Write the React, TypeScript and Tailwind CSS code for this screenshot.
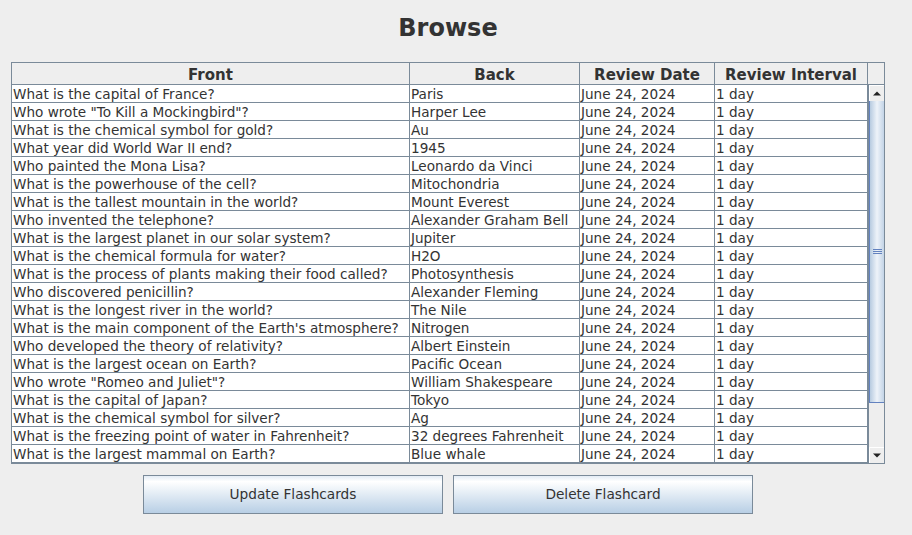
const cards: [string, string][] = [
  ["What is the capital of France?", "Paris"],
  ['Who wrote "To Kill a Mockingbird"?', "Harper Lee"],
  ["What is the chemical symbol for gold?", "Au"],
  ["What year did World War II end?", "1945"],
  ["Who painted the Mona Lisa?", "Leonardo da Vinci"],
  ["What is the powerhouse of the cell?", "Mitochondria"],
  ["What is the tallest mountain in the world?", "Mount Everest"],
  ["Who invented the telephone?", "Alexander Graham Bell"],
  ["What is the largest planet in our solar system?", "Jupiter"],
  ["What is the chemical formula for water?", "H2O"],
  ["What is the process of plants making their food called?", "Photosynthesis"],
  ["Who discovered penicillin?", "Alexander Fleming"],
  ["What is the longest river in the world?", "The Nile"],
  ["What is the main component of the Earth's atmosphere?", "Nitrogen"],
  ["Who developed the theory of relativity?", "Albert Einstein"],
  ["What is the largest ocean on Earth?", "Pacific Ocean"],
  ['Who wrote "Romeo and Juliet"?', "William Shakespeare"],
  ["What is the capital of Japan?", "Tokyo"],
  ["What is the chemical symbol for silver?", "Ag"],
  ["What is the freezing point of water in Fahrenheit?", "32 degrees Fahrenheit"],
  ["What is the largest mammal on Earth?", "Blue whale"],
];

const headerCell = "h-full pt-[3px] flex items-center justify-center border-r border-[#7a8a99] text-[15px] font-bold";
const cell = "h-full pl-[1px] pt-[2px] flex items-center border-r border-[#7a8a99] whitespace-nowrap overflow-hidden";

function ArrowButton({ up }: { up?: boolean }) {
  return (
    <div className="h-[16px] w-full flex items-center justify-center bg-[#eeeeee] border-t border-l border-white">
      <svg width="8" height="5" viewBox="0 0 8 5">
        {up ? <path d="M0 4.5 L4 0.5 L8 4.5 Z" fill="#222" /> : <path d="M0 0.5 L4 4.5 L8 0.5 Z" fill="#222" />}
      </svg>
    </div>
  );
}

export default function App() {
  return (
    <div
      className="w-[912px] h-[535px] bg-[#eeeeee] text-[#333333] overflow-hidden"
      style={{ fontFamily: '"DejaVu Sans", sans-serif' }}
    >
      <div className="ml-[11px] w-[874px] flex flex-col">
        <div className="h-[56px] flex items-center justify-center text-[24px] font-bold">Browse</div>
        <div className="h-[6px]" />

        <div className="border border-[#7a8a99] bg-white h-[402px] flex flex-col">
          {/* header */}
          <div className="h-[22px] flex border-b border-[#7a8a99] bg-[#eeeeee]">
            <div className={`${headerCell} w-[398px]`}>Front</div>
            <div className={`${headerCell} w-[170px]`}>Back</div>
            <div className={`${headerCell} w-[135px]`}>Review Date</div>
            <div className={`${headerCell} w-[153px]`}>Review Interval</div>
            <div className="flex-1 h-full" />
          </div>

          <div className="flex flex-1 min-h-0">
            <div className="w-[856px] flex flex-col text-[13.6px]">
              {cards.map(([front, back], i) => (
                <div key={i} className="h-[18px] flex border-b border-[#7a8a99] shrink-0">
                  <div className={`${cell} w-[398px]`}>{front}</div>
                  <div className={`${cell} w-[170px]`}>{back}</div>
                  <div className={`${cell} w-[135px]`}>June 24, 2024</div>
                  <div className={`${cell} w-[153px]`}>1 day</div>
                </div>
              ))}
            </div>

            {/* scrollbar */}
            <div className="flex-1 border-l border-[#7a8a99] bg-[#eeeeee] flex flex-col">
              <ArrowButton up />
              <div className="h-[302px] bg-linear-to-r from-[#b7cbe0] via-[#eef3f9] to-[#c3d4e7] border-l border-[#6382bf] border-b border-b-[#6382bf] flex items-center justify-center">
                <div className="flex flex-col gap-[1px]">
                  <div className="w-[9px] h-[1px] bg-[#6382bf]" />
                  <div className="w-[9px] h-[1px] bg-[#6382bf]" />
                  <div className="w-[9px] h-[1px] bg-[#6382bf]" />
                </div>
              </div>
              <div className="flex-1" />
              <ArrowButton />
            </div>
          </div>
        </div>

        <div className="mt-[11px] flex justify-center gap-[10px]">
          <button className="w-[300px] h-[39px] border border-[#7a8a99] bg-linear-to-b from-[#e3ecf5] via-[#ffffff] via-15% to-[#b8cfe5] text-[13.7px] text-[#333333]">
            Update Flashcards
          </button>
          <button className="w-[300px] h-[39px] border border-[#7a8a99] bg-linear-to-b from-[#e3ecf5] via-[#ffffff] via-15% to-[#b8cfe5] text-[13.7px] text-[#333333]">
            Delete Flashcard
          </button>
        </div>
      </div>
    </div>
  );
}
